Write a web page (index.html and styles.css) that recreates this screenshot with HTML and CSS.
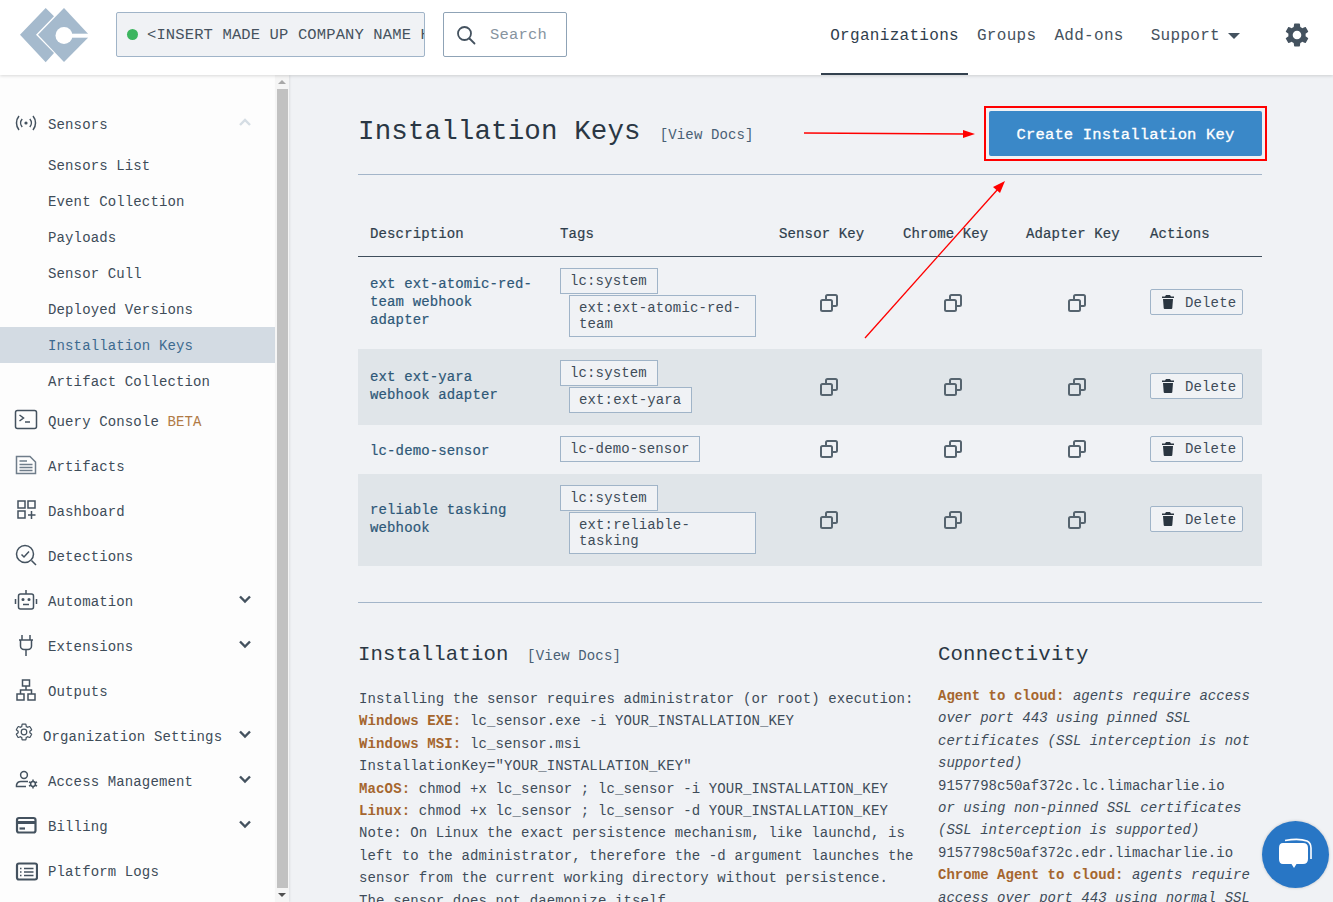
FILE: index.html
```html
<!DOCTYPE html>
<html lang="en">
<head>
    <meta charset="UTF-8">
    <meta name="viewport" content="width=device-width, initial-scale=1.0">
    <title>Installation Keys</title>
    <link rel="stylesheet" href="styles.css">
</head>
<body>
    <!-- Top bar -->
    <header class="topbar">
        <svg class="logo" viewBox="0 0 70 56" width="70" height="56">
            <g transform="translate(-19 -6)">
                <polygon fill="#a5bacd" points="20,33.7 45.7,7 54,15.3 36,33.7 54,52 45.7,61.3"/>
                <polygon fill="#a5bacd" points="38,33.7 64,7 88,32.7 88,36.7 64,61"/>
                <circle cx="64" cy="34.5" r="8.5" fill="#fff"/>
                <rect x="68" y="32.7" width="21" height="4" fill="#fff"/>
            </g>
        </svg>
        <div class="org-select">
            <span class="status-dot"></span>
            <span class="org-name">&lt;INSERT MADE UP COMPANY NAME HERE&gt;</span>
        </div>
        <div class="search-box">
            <svg viewBox="0 0 20 20" width="20" height="20" fill="none" stroke="#44525f" stroke-width="1.8">
                <circle cx="8.5" cy="8.5" r="6.5"/>
                <path d="M13.5 13.5 L18.5 18.5" stroke-linecap="round"/>
            </svg>
            <span>Search</span>
        </div>
        <nav class="topnav">
            <a class="tab active">Organizations</a>
            <a class="tab">Groups</a>
            <a class="tab">Add-ons</a>
            <a class="tab support">Support <span class="caret"></span></a>
        </nav>
        <svg class="gear" viewBox="2 2 20 20" width="24" height="24" fill="#44525f">
            <path d="M19.14 12.94c.04-.3.06-.61.06-.94 0-.32-.02-.64-.07-.94l2.03-1.58c.18-.14.23-.41.12-.61l-1.92-3.32c-.12-.22-.37-.29-.59-.22l-2.39.96c-.5-.38-1.03-.7-1.62-.94l-.36-2.54c-.04-.24-.24-.41-.48-.41h-3.84c-.24 0-.43.17-.47.41l-.36 2.54c-.59.24-1.13.57-1.62.94l-2.39-.96c-.22-.08-.47 0-.59.22L2.74 8.87c-.12.21-.08.47.12.61l2.03 1.58c-.05.3-.09.63-.09.94s.02.64.07.94l-2.03 1.58c-.18.14-.23.41-.12.61l1.92 3.32c.12.22.37.29.59.22l2.39-.96c.5.38 1.03.7 1.62.94l.36 2.54c.05.24.24.41.48.41h3.84c.24 0 .44-.17.47-.41l.36-2.54c.59-.24 1.13-.56 1.62-.94l2.39.96c.22.08.47 0 .59-.22l1.92-3.32c.12-.22.07-.47-.12-.61l-2.01-1.58zM12 15.6c-1.98 0-3.6-1.62-3.6-3.6s1.62-3.6 3.6-3.6 3.6 1.62 3.6 3.6-1.62 3.6-3.6 3.6z"/>
        </svg>
    </header>

    <div class="layout">
        <!-- Sidebar -->
        <aside class="sidebar">
            <ul class="menu">
                <li class="menu-item">
                    <svg class="icon" viewBox="0 0 24 24"><circle cx="12" cy="12" r="1.6" fill="#44525f" stroke="none"/><path d="M8.2 8a6 6 0 0 0 0 8M15.8 8a6 6 0 0 1 0 8M5 5a11 11 0 0 0 0 14M19 5a11 11 0 0 1 0 14"/></svg>
                    <span>Sensors</span>
                    <svg class="chevron up" viewBox="0 0 14 10"><path d="M2 8 L7 3 L12 8"/></svg>
                </li>
                <li class="sub-item">Sensors List</li>
                <li class="sub-item">Event Collection</li>
                <li class="sub-item">Payloads</li>
                <li class="sub-item">Sensor Cull</li>
                <li class="sub-item">Deployed Versions</li>
                <li class="sub-item selected">Installation Keys</li>
                <li class="sub-item">Artifact Collection</li>
                <li class="menu-item">
                    <svg class="icon" viewBox="0 0 24 24"><rect x="1.5" y="2.5" width="21" height="18" rx="2"/><path d="M5.5 7 L9.5 10 L5.5 13M11 14 H16"/></svg>
                    <span>Query Console <span class="beta">BETA</span></span>
                </li>
                <li class="menu-item">
                    <svg class="icon light" viewBox="0 0 24 24"><path d="M2.5 3.5 H16 L21.5 9 V20.5 H2.5 Z"/><path d="M5.5 8 H13M5.5 11.5 H18.5M5.5 14.5 H18.5M5.5 17.5 H18.5"/></svg>
                    <span>Artifacts</span>
                </li>
                <li class="menu-item">
                    <svg class="icon" viewBox="0 0 24 24"><rect x="4" y="3" width="7" height="7"/><rect x="14" y="3" width="7" height="7"/><rect x="4" y="13" width="7" height="7"/><path d="M17.5 13 V21M14 17 H21.5"/></svg>
                    <span>Dashboard</span>
                </li>
                <li class="menu-item">
                    <svg class="icon" viewBox="0 0 24 24"><circle cx="11" cy="11" r="8.5"/><path d="M7.5 11.5 L10 14 L15 8.5M17.5 17.5 L22 22"/></svg>
                    <span>Detections</span>
                </li>
                <li class="menu-item">
                    <svg class="icon" viewBox="0 0 24 24"><rect x="4.5" y="6" width="15" height="15" rx="2"/><path d="M12 2 V6M1.5 11 V16M22.5 11 V16M9 16.5 H15"/><circle cx="9" cy="11.5" r=".8"/><circle cx="15" cy="11.5" r=".8"/></svg>
                    <span>Automation</span>
                    <svg class="chevron" viewBox="0 0 14 10"><path d="M2 2.5 L7 7.5 L12 2.5"/></svg>
                </li>
                <li class="menu-item">
                    <svg class="icon" viewBox="0 0 24 24"><path d="M5 7 H19M8 7 V2M16 7 V2M6.5 7 V13 A3.5 3.5 0 0 0 10 16.5 H14 A3.5 3.5 0 0 0 17.5 13 V7M12 16.5 V23"/></svg>
                    <span>Extensions</span>
                    <svg class="chevron" viewBox="0 0 14 10"><path d="M2 2.5 L7 7.5 L12 2.5"/></svg>
                </li>
                <li class="menu-item">
                    <svg class="icon" viewBox="0 0 24 24"><rect x="8.5" y="2" width="7" height="6"/><rect x="3" y="16" width="7" height="6"/><rect x="14" y="16" width="7" height="6"/><path d="M12 8 V12M6.5 16 V12 H17.5 V16"/></svg>
                    <span>Outputs</span>
                </li>
                <li class="menu-item settings">
                    <svg class="icon" viewBox="1 1 22 22"><path d="M19.14 12.94c.04-.3.06-.61.06-.94 0-.32-.02-.64-.07-.94l2.03-1.58c.18-.14.23-.41.12-.61l-1.92-3.32c-.12-.22-.37-.29-.59-.22l-2.39.96c-.5-.38-1.03-.7-1.62-.94l-.36-2.54c-.04-.24-.24-.41-.48-.41h-3.84c-.24 0-.43.17-.47.41l-.36 2.54c-.59.24-1.13.57-1.62.94l-2.39-.96c-.22-.08-.47 0-.59.22L2.74 8.87c-.12.21-.08.47.12.61l2.03 1.58c-.05.3-.09.63-.09.94s.02.64.07.94l-2.03 1.58c-.18.14-.23.41-.12.61l1.92 3.32c.12.22.37.29.59.22l2.39-.96c.5.38 1.03.7 1.62.94l.36 2.54c.05.24.24.41.48.41h3.84c.24 0 .44-.17.47-.41l.36-2.54c.59-.24 1.13-.56 1.62-.94l2.39.96c.22.08.47 0 .59-.22l1.92-3.32c.12-.22.07-.47-.12-.61l-2.01-1.58z"/><circle cx="12" cy="12" r="3.4"/></svg>
                    <span>Organization Settings</span>
                    <svg class="chevron" viewBox="0 0 14 10"><path d="M2 2.5 L7 7.5 L12 2.5"/></svg>
                </li>
                <li class="menu-item">
                    <svg class="icon" viewBox="0 0 24 24"><circle cx="10" cy="7" r="3.4"/><path d="M14 13.5 H7 A4.5 4.5 0 0 0 2.5 17 V18.5 H12"/><circle cx="19" cy="16" r="2.4"/><path d="M19 11.5 V13.5M19 18.5 V20.5M15 13.8 L17 15M21 17 L23 18.2M15 18.2 L17 17M21 15 L23 13.8"/></svg>
                    <span>Access Management</span>
                    <svg class="chevron" viewBox="0 0 14 10"><path d="M2 2.5 L7 7.5 L12 2.5"/></svg>
                </li>
                <li class="menu-item">
                    <svg class="icon thick" viewBox="0 0 24 24"><rect x="3" y="5" width="18.5" height="14.5" rx="2"/><path d="M3 9.5 H21.5" stroke-width="3"/><path d="M5.5 15.5 H11"/></svg>
                    <span>Billing</span>
                    <svg class="chevron" viewBox="0 0 14 10"><path d="M2 2.5 L7 7.5 L12 2.5"/></svg>
                </li>
                <li class="menu-item logs">
                    <svg class="icon thick" viewBox="0 0 24 24"><rect x="3" y="3.5" width="20" height="16" rx="2"/><path d="M6 8.5 H7.5M10 8.5 H19.5M6 12 H7.5M10 12 H19.5M6 15.5 H7.5M10 15.5 H19.5" stroke-width="1.5"/></svg>
                    <span>Platform Logs</span>
                </li>
            </ul>
        </aside>
        <div class="scrollbar">
            <span class="arrow-up"></span>
            <span class="thumb"></span>
            <span class="arrow-down"></span>
        </div>

        <!-- Contenido -->
        <main class="content">
            <div class="page-head">
                <h1>Installation Keys</h1>
                <a class="docs-link">[View Docs]</a>
                <span class="btn-frame"><button class="btn-create">Create Installation Key</button></span>
            </div>

            <table class="keys">
                <colgroup>
                    <col class="col-desc"><col class="col-tags"><col class="col-key"><col class="col-key"><col class="col-key"><col>
                </colgroup>
                <thead>
                    <tr>
                        <th>Description</th><th>Tags</th><th>Sensor Key</th><th>Chrome Key</th><th>Adapter Key</th><th>Actions</th>
                    </tr>
                </thead>
                <tbody>
                    <tr>
                        <td class="desc">ext ext-atomic-red-team webhook adapter</td>
                        <td class="tags"><span class="tag">lc:system</span><span class="tag sub">ext:ext-atomic-red-team</span></td>
                        <td class="copy"><svg viewBox="0 0 20 20" width="20" height="20"><path d="M7 6 V3.5 A1.5 1.5 0 0 1 8.5 2 H16.5 A1.5 1.5 0 0 1 18 3.5 V11.5 A1.5 1.5 0 0 1 16.5 13 H14"/><rect x="2" y="7" width="11" height="11" rx="1.5"/></svg></td>
                        <td class="copy"><svg viewBox="0 0 20 20" width="20" height="20"><path d="M7 6 V3.5 A1.5 1.5 0 0 1 8.5 2 H16.5 A1.5 1.5 0 0 1 18 3.5 V11.5 A1.5 1.5 0 0 1 16.5 13 H14"/><rect x="2" y="7" width="11" height="11" rx="1.5"/></svg></td>
                        <td class="copy"><svg viewBox="0 0 20 20" width="20" height="20"><path d="M7 6 V3.5 A1.5 1.5 0 0 1 8.5 2 H16.5 A1.5 1.5 0 0 1 18 3.5 V11.5 A1.5 1.5 0 0 1 16.5 13 H14"/><rect x="2" y="7" width="11" height="11" rx="1.5"/></svg></td>
                        <td><button class="btn-delete"><svg viewBox="0 0 12 14" width="12" height="14"><path d="M4 0 H8 L9 1.5 H12 V3 H0 V1.5 H3 Z M1 4 H11 L10.3 13 A1 1 0 0 1 9.3 14 H2.7 A1 1 0 0 1 1.7 13 Z"/></svg>Delete</button></td>
                    </tr>
                    <tr class="alt">
                        <td class="desc">ext ext-yara webhook adapter</td>
                        <td class="tags"><span class="tag">lc:system</span><span class="tag sub">ext:ext-yara</span></td>
                        <td class="copy"><svg viewBox="0 0 20 20" width="20" height="20"><path d="M7 6 V3.5 A1.5 1.5 0 0 1 8.5 2 H16.5 A1.5 1.5 0 0 1 18 3.5 V11.5 A1.5 1.5 0 0 1 16.5 13 H14"/><rect x="2" y="7" width="11" height="11" rx="1.5"/></svg></td>
                        <td class="copy"><svg viewBox="0 0 20 20" width="20" height="20"><path d="M7 6 V3.5 A1.5 1.5 0 0 1 8.5 2 H16.5 A1.5 1.5 0 0 1 18 3.5 V11.5 A1.5 1.5 0 0 1 16.5 13 H14"/><rect x="2" y="7" width="11" height="11" rx="1.5"/></svg></td>
                        <td class="copy"><svg viewBox="0 0 20 20" width="20" height="20"><path d="M7 6 V3.5 A1.5 1.5 0 0 1 8.5 2 H16.5 A1.5 1.5 0 0 1 18 3.5 V11.5 A1.5 1.5 0 0 1 16.5 13 H14"/><rect x="2" y="7" width="11" height="11" rx="1.5"/></svg></td>
                        <td><button class="btn-delete"><svg viewBox="0 0 12 14" width="12" height="14"><path d="M4 0 H8 L9 1.5 H12 V3 H0 V1.5 H3 Z M1 4 H11 L10.3 13 A1 1 0 0 1 9.3 14 H2.7 A1 1 0 0 1 1.7 13 Z"/></svg>Delete</button></td>
                    </tr>
                    <tr class="short">
                        <td class="desc">lc-demo-sensor</td>
                        <td class="tags"><span class="tag">lc-demo-sensor</span></td>
                        <td class="copy"><svg viewBox="0 0 20 20" width="20" height="20"><path d="M7 6 V3.5 A1.5 1.5 0 0 1 8.5 2 H16.5 A1.5 1.5 0 0 1 18 3.5 V11.5 A1.5 1.5 0 0 1 16.5 13 H14"/><rect x="2" y="7" width="11" height="11" rx="1.5"/></svg></td>
                        <td class="copy"><svg viewBox="0 0 20 20" width="20" height="20"><path d="M7 6 V3.5 A1.5 1.5 0 0 1 8.5 2 H16.5 A1.5 1.5 0 0 1 18 3.5 V11.5 A1.5 1.5 0 0 1 16.5 13 H14"/><rect x="2" y="7" width="11" height="11" rx="1.5"/></svg></td>
                        <td class="copy"><svg viewBox="0 0 20 20" width="20" height="20"><path d="M7 6 V3.5 A1.5 1.5 0 0 1 8.5 2 H16.5 A1.5 1.5 0 0 1 18 3.5 V11.5 A1.5 1.5 0 0 1 16.5 13 H14"/><rect x="2" y="7" width="11" height="11" rx="1.5"/></svg></td>
                        <td><button class="btn-delete"><svg viewBox="0 0 12 14" width="12" height="14"><path d="M4 0 H8 L9 1.5 H12 V3 H0 V1.5 H3 Z M1 4 H11 L10.3 13 A1 1 0 0 1 9.3 14 H2.7 A1 1 0 0 1 1.7 13 Z"/></svg>Delete</button></td>
                    </tr>
                    <tr class="alt">
                        <td class="desc">reliable tasking webhook</td>
                        <td class="tags"><span class="tag">lc:system</span><span class="tag sub">ext:reliable-tasking</span></td>
                        <td class="copy"><svg viewBox="0 0 20 20" width="20" height="20"><path d="M7 6 V3.5 A1.5 1.5 0 0 1 8.5 2 H16.5 A1.5 1.5 0 0 1 18 3.5 V11.5 A1.5 1.5 0 0 1 16.5 13 H14"/><rect x="2" y="7" width="11" height="11" rx="1.5"/></svg></td>
                        <td class="copy"><svg viewBox="0 0 20 20" width="20" height="20"><path d="M7 6 V3.5 A1.5 1.5 0 0 1 8.5 2 H16.5 A1.5 1.5 0 0 1 18 3.5 V11.5 A1.5 1.5 0 0 1 16.5 13 H14"/><rect x="2" y="7" width="11" height="11" rx="1.5"/></svg></td>
                        <td class="copy"><svg viewBox="0 0 20 20" width="20" height="20"><path d="M7 6 V3.5 A1.5 1.5 0 0 1 8.5 2 H16.5 A1.5 1.5 0 0 1 18 3.5 V11.5 A1.5 1.5 0 0 1 16.5 13 H14"/><rect x="2" y="7" width="11" height="11" rx="1.5"/></svg></td>
                        <td><button class="btn-delete"><svg viewBox="0 0 12 14" width="12" height="14"><path d="M4 0 H8 L9 1.5 H12 V3 H0 V1.5 H3 Z M1 4 H11 L10.3 13 A1 1 0 0 1 9.3 14 H2.7 A1 1 0 0 1 1.7 13 Z"/></svg>Delete</button></td>
                    </tr>
                </tbody>
            </table>

            <div class="info">
                <section class="install">
                    <h3>Installation <a class="docs-link">[View Docs]</a></h3>
                    <p>
                        Installing the sensor requires administrator (or root) execution:<br>
                        <b>Windows EXE:</b> lc_sensor.exe -i YOUR_INSTALLATION_KEY<br>
                        <b>Windows MSI:</b> lc_sensor.msi InstallationKey="YOUR_INSTALLATION_KEY"<br>
                        <b>MacOS:</b> chmod +x lc_sensor ; lc_sensor -i YOUR_INSTALLATION_KEY<br>
                        <b>Linux:</b> chmod +x lc_sensor ; lc_sensor -d YOUR_INSTALLATION_KEY<br>
                        Note: On Linux the exact persistence mechanism, like launchd, is left to the administrator, therefore the -d argument launches the sensor from the current working directory without persistence.<br>
                        The sensor does not daemonize itself.
                    </p>
                </section>
                <section class="connect">
                    <h3>Connectivity</h3>
                    <p>
                        <b>Agent to cloud:</b> <i>agents require access over port 443 using pinned SSL certificates (SSL interception is not supported)</i><br>
                        9157798c50af372c.lc.limacharlie.io<br>
                        <i>or using non-pinned SSL certificates (SSL interception is supported)</i><br>
                        9157798c50af372c.edr.limacharlie.io<br>
                        <b>Chrome Agent to cloud:</b> <i>agents require access over port 443 using normal SSL</i>
                    </p>
                </section>
            </div>
        </main>
    </div>

    <!-- Flechas rojas de la captura -->
    <svg class="annotations" viewBox="0 0 1333 902" width="1333" height="902">
        <path d="M804 133 L964 134" stroke="#f00" stroke-width="1.3" fill="none"/>
        <polygon points="975,134 963,130 963,138" fill="#f00"/>
        <path d="M865 338 L998 189" stroke="#f00" stroke-width="1.3" fill="none"/>
        <polygon points="1005,181 993,187 1000,193" fill="#f00"/>
    </svg>

    <div class="chat-bubble">
        <svg viewBox="0 0 34 34" width="34" height="34">
            <path d="M6 2.5 Q20 0 28 3 Q32 5 32 10 V21" fill="none" stroke="#fff" stroke-width="1.6"/>
            <path d="M4 5 H24 Q29 5 29 10 V21 Q29 26 24 26 H17.5 L15 30 L12.5 26 H4 Q0 26 0 21 V10 Q0 5 4 5 Z" fill="#fff"/>
        </svg>
    </div>
</body>
</html>
```

FILE: styles.css
```css
/* Base */
* {
    box-sizing: border-box;
}

body {
    margin: 0;
    height: 100vh;
    overflow: hidden;
    background: #f0f2f5;
    color: #3e4c59;
    font-family: "Liberation Mono", "DejaVu Sans Mono", monospace;
    font-size: 14px;
    letter-spacing: 0.13px;
}

/* Barra superior */
.topbar {
    position: relative;
    z-index: 2;
    display: flex;
    align-items: center;
    height: 75px;
    padding: 0 0 6px 19px;
    background: #fff;
    box-shadow: 0 1px 3px rgba(0, 0, 0, 0.15);
}

.logo {
    flex: none;
}

.org-select {
    flex: none;
    display: flex;
    align-items: center;
    width: 309px;
    height: 45px;
    margin-left: 27px;
    padding-left: 10px;
    overflow: hidden;
    background: #f0f2f5;
    border: 1px solid #a0b4c8;
    border-radius: 2px;
    font-size: 15.5px;
    letter-spacing: 0.13px;
    white-space: nowrap;
    color: #46525e;
}

.status-dot {
    flex: none;
    width: 11px;
    height: 11px;
    margin-right: 9px;
    border-radius: 50%;
    background: #3cb55f;
}

.search-box {
    flex: none;
    display: flex;
    align-items: center;
    gap: 14px;
    width: 124px;
    height: 45px;
    margin-left: 18px;
    padding-left: 12px;
    background: #fff;
    border: 1px solid #8fa3b6;
    border-radius: 2px;
    font-size: 15.5px;
    letter-spacing: 0.2px;
    color: #87949f;
}

.topnav {
    display: flex;
    align-self: flex-start;
    height: 75px;
    margin-left: auto;
    font-size: 16px;
    letter-spacing: 0.3px;
}

.tab {
    display: flex;
    align-items: center;
    padding: 0 9px 2px;
    color: #46525e;
    border-bottom: 2px solid transparent;
}

.tab.active {
    color: #2f3e4c;
    border-bottom-color: #33414e;
}

.tab.support {
    padding-left: 18px;
}

.caret {
    width: 0;
    height: 0;
    margin-left: 8px;
    border-left: 6px solid transparent;
    border-right: 6px solid transparent;
    border-top: 6px solid #44525f;
}

.gear {
    flex: none;
    margin: 0 24px 0 36px;
}

/* Layout principal */
.layout {
    display: flex;
    height: 827px;
}

.sidebar {
    flex: none;
    width: 275px;
    padding-top: 27px;
    overflow: hidden;
    background: #fdfdfd;
}

.menu {
    margin: 0;
    padding: 0;
    list-style: none;
}

.menu-item {
    display: flex;
    align-items: center;
    height: 45px;
    padding: 0 23px 0 14px;
}

.menu-item > span {
    flex: 1;
    margin-left: 10px;
    white-space: nowrap;
}

.menu-item.settings {
    padding-left: 15px;
}

.menu-item.settings .icon {
    width: 18px;
    height: 18px;
    margin-top: -10px;
}

.icon {
    flex: none;
    width: 24px;
    height: 24px;
    margin-top: -3px;
    fill: none;
    stroke: #44525f;
    stroke-width: 1.5;
}

.menu-item.logs .icon {
    margin-top: 0;
}

.icon.light {
    stroke: #6f7d8a;
}

.icon.thick {
    stroke-width: 2.2;
}

.chevron {
    flex: none;
    width: 14px;
    height: 10px;
    margin-top: -6px;
    fill: none;
    stroke: #44525f;
    stroke-width: 2.4;
}

.chevron.up {
    stroke: #d5dde4;
}

.sub-item {
    height: 36px;
    padding-left: 48px;
    line-height: 38px;
}

.sub-item.selected {
    background: #d3dbe3;
    color: #3d6a8f;
}

.beta {
    color: #b07a45;
}

/* Scrollbar de la barra lateral */
.scrollbar {
    flex: none;
    display: flex;
    flex-direction: column;
    align-items: center;
    width: 14px;
    padding: 5px 1px;
    background: #f5f5f5;
    box-shadow: 1px 0 2px rgba(0, 0, 0, 0.08);
}

.thumb {
    flex: 1;
    width: 11px;
    margin: 5px 0;
    background: #c1c1c1;
}

.arrow-up,
.arrow-down {
    width: 0;
    height: 0;
    border-left: 4px solid transparent;
    border-right: 4px solid transparent;
}

.arrow-up {
    border-bottom: 4px solid #a8a8a8;
}

.arrow-down {
    border-top: 4px solid #505050;
}

/* Contenido */
.content {
    flex: none;
    width: 973px;
    margin-left: 69px;
    padding-top: 36px;
    overflow: hidden;
}

.page-head {
    display: flex;
    align-items: center;
    width: 904px;
    height: 64px;
    padding-bottom: 18px;
    border-bottom: 1px solid #a3b5c9;
}

h1 {
    margin: 0 19px 4px 0;
    font-size: 27.5px;
    font-weight: 400;
    color: #2a3744;
}

.docs-link {
    margin-top: 3px;
    font-size: 14px;
    font-weight: 400;
    letter-spacing: 0.13px;
    color: #4a5f74;
}

/* Recuadro rojo de la captura */
.btn-frame {
    flex: none;
    margin: -5px -5px -5px auto;
    padding: 3px;
    border: 2px solid #f00;
}

.btn-create {
    display: block;
    width: 273px;
    height: 45px;
    padding: 2px 0 0;
    background: #3a88c8;
    border: 0;
    border-radius: 2px;
    font-family: inherit;
    font-size: 15.5px;
    letter-spacing: 0.18px;
    -webkit-text-stroke: 0.3px #fff;
    color: #fff;
}

/* Tabla de claves */
.keys {
    width: 904px;
    border-collapse: collapse;
    table-layout: fixed;
}

.col-desc {
    width: 190px;
}

.col-tags {
    width: 219px;
}

.col-key {
    width: 124px;
}

.keys th {
    height: 81px;
    padding: 0 12px 13px;
    border-bottom: 1px solid #3f4e5c;
    vertical-align: bottom;
    text-align: left;
    font-weight: 400;
    line-height: 18px;
    -webkit-text-stroke: 0.2px #2f3e4c;
    color: #2f3e4c;
}

.keys th:nth-child(n+5) {
    padding-left: 11px;
}

.keys td {
    padding: 11px 12px 12px;
    vertical-align: middle;
}

.keys td:last-child {
    padding-left: 11px;
}

.keys .alt td {
    background: #e0e5e9;
}

.keys td.desc {
    padding: 12px 12px 14px;
    line-height: 18px;
    -webkit-text-stroke: 0.2px #2e5878;
    color: #2e5878;
}

.keys .short td.desc {
    padding: 15px 12px 12px;
}

.keys td.tags {
    padding-right: 11px;
}

.keys td.copy {
    padding: 0;
    text-align: center;
}

.copy svg {
    display: block;
    margin: 0 auto;
    fill: none;
    stroke: #56646f;
    stroke-width: 2;
}

.tag {
    display: block;
    width: fit-content;
    padding: 4px 10px 4px 9px;
    background: #f0f2f5;
    border: 1px solid #a0b4c8;
    line-height: 16px;
}

.tag.sub {
    margin: 1px 0 0 9px;
}

.btn-delete {
    display: flex;
    align-items: center;
    gap: 11px;
    width: 93px;
    height: 26px;
    padding: 1px 0 0 11px;
    background: #f0f2f5;
    border: 1px solid #a0b4c8;
    border-radius: 2px;
    font-family: inherit;
    font-size: 14px;
    letter-spacing: 0.13px;
    color: #3e4c59;
}

.btn-delete svg {
    flex: none;
    margin-top: -1px;
    fill: #2a3540;
}

/* Instalación y conectividad */
.info {
    display: grid;
    grid-template-columns: 580px 324px;
    width: 904px;
    margin-top: 36px;
    padding-top: 37px;
    border-top: 1px solid #a3b5c9;
}

.info h3 {
    margin: 0;
    height: 30px;
    font-size: 20.7px;
    font-weight: 400;
    line-height: 30px;
    color: #2a3744;
}

.info h3 .docs-link {
    margin-left: 6px;
}

.info p {
    margin: 0;
    line-height: 22.4px;
}

.install {
    padding-right: 20px;
}

.install p {
    margin-top: 18.4px;
    padding-left: 1px;
}

.connect p {
    margin-top: 15.4px;
    letter-spacing: 0.03px;
}

.info b {
    color: #a5662e;
}

/* Flechas */
.annotations {
    position: absolute;
    top: 0;
    left: 0;
    z-index: 3;
    pointer-events: none;
}

/* Chat */
.chat-bubble {
    position: fixed;
    right: 4px;
    bottom: 14px;
    z-index: 4;
    display: flex;
    align-items: center;
    justify-content: center;
    width: 67px;
    height: 67px;
    border-radius: 50%;
    background: #2876c5;
    box-shadow: 0 0 3px rgba(0, 0, 0, 0.2);
}
```
